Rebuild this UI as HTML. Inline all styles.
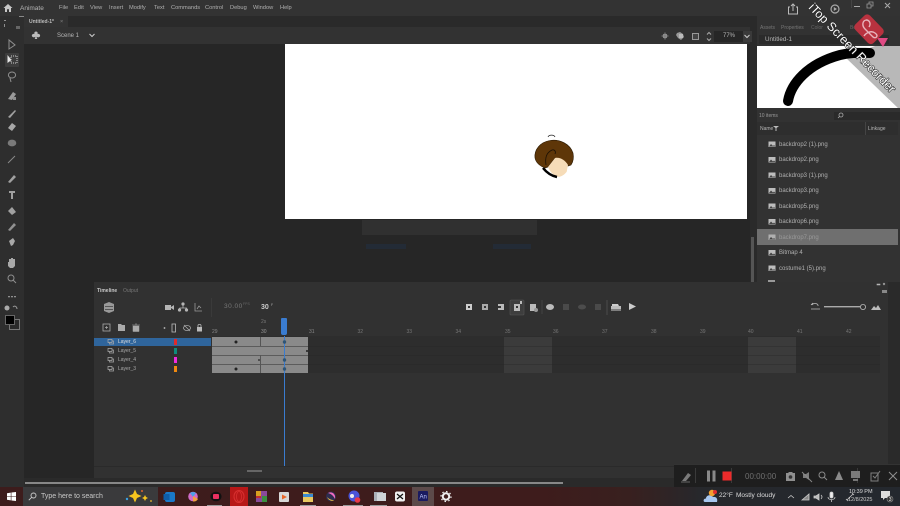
<!DOCTYPE html>
<html><head><meta charset="utf-8"><style>
html,body{margin:0;padding:0;width:900px;height:506px;overflow:hidden;background:#2b2b2b}
#r{position:absolute;left:0;top:0;width:900px;height:506px;overflow:hidden;font-family:"Liberation Sans",sans-serif;color:#c8c8c8;font-size:5.700px;filter:blur(.3px)}
.a{position:absolute}
.t{position:absolute;white-space:nowrap;line-height:1}
svg{position:absolute;overflow:visible}
</style></head><body><div id="r">
<!-- base regions -->
<div class="a" style="left:0;top:0;width:900px;height:16px;background:#333"></div>
<div class="a" style="left:0;top:16px;width:24px;height:471px;background:#2e2e2e"></div>
<div class="a" style="left:24px;top:16px;width:733px;height:11px;background:#2a2a2a"></div>
<div class="a" style="left:24px;top:27px;width:726px;height:17px;background:#323232"></div>
<div class="a" style="left:24px;top:44px;width:733px;height:238px;background:#262626"></div>
<div class="a" style="left:24px;top:282px;width:70px;height:205px;background:#262626"></div>
<div class="a" style="left:750px;top:27px;width:7px;height:255px;background:#2a2a2a"></div>
<div class="a" style="left:757px;top:16px;width:143px;height:266px;background:#323232"></div>
<div class="a" style="left:888px;top:282px;width:12px;height:205px;background:#2a2a2a"></div>
<div class="a" style="left:94px;top:282px;width:794px;height:196px;background:#313131"></div>
<div class="a" style="left:24px;top:478px;width:876px;height:9px;background:#2a2a2a"></div>

<!-- menu -->
<svg style="left:3px;top:3px" width="10" height="10" viewBox="0 0 10 10"><path d="M5 1 L9.500 5 H8 V9 H6 V6.200 H4 V9 H2 V5 H.5Z" fill="#c8c8c8"/></svg>
<span class="t" style="left:20px;top:6px;font-size:6.500px;color:#b5b5b5">Animate</span>
<div class="a" style="left:19px;top:16px;width:26px;height:1px;background:#888"></div>
<span class="t" style="left:59px;top:5.500px;color:#b0b0b0">File</span>
<span class="t" style="left:74px;top:5.500px;color:#b0b0b0">Edit</span>
<span class="t" style="left:90px;top:5.500px;color:#b0b0b0">View</span>
<span class="t" style="left:109px;top:5.500px;color:#b0b0b0">Insert</span>
<span class="t" style="left:129px;top:5.500px;color:#b0b0b0">Modify</span>
<span class="t" style="left:154px;top:5.500px;color:#b0b0b0">Text</span>
<span class="t" style="left:171px;top:5.500px;color:#b0b0b0">Commands</span>
<span class="t" style="left:205px;top:5.500px;color:#b0b0b0">Control</span>
<span class="t" style="left:230px;top:5.500px;color:#b0b0b0">Debug</span>
<span class="t" style="left:253px;top:5.500px;color:#b0b0b0">Window</span>
<span class="t" style="left:280px;top:5.500px;color:#b0b0b0">Help</span>

<!-- top right icons -->
<svg style="left:787px;top:3px" width="14" height="12" viewBox="0 0 14 12" fill="none" stroke="#bbb" stroke-width="1"><path d="M3 4H1.500V11H10.500V4H9M6 8V1M4 3L6 1L8 3"/></svg>
<svg style="left:830px;top:4px" width="10" height="10" viewBox="0 0 10 10"><circle cx="5" cy="5" r="4" fill="none" stroke="#aaa" stroke-width="1.200"/><path d="M3.800 3L7 5L3.800 7Z" fill="#aaa"/></svg>
<div class="a" style="left:851px;top:0;width:1px;height:8px;background:#444"></div>
<div class="a" style="left:854px;top:6px;width:6px;height:1px;background:#aaa"></div>
<svg style="left:866px;top:1px" width="8" height="8" viewBox="0 0 8 8" fill="none" stroke="#999" stroke-width=".8"><path d="M1 3H5V7H1ZM3 3V1H7V5H5"/></svg>
<svg style="left:884px;top:2px" width="7" height="7" viewBox="0 0 7 7" stroke="#aaa" stroke-width="1"><path d="M1 1L6 6M6 1L1 6"/></svg>

<!-- tab row -->
<div class="a" style="left:24px;top:16px;width:44px;height:11px;background:#333"></div>
<span class="t" style="left:29px;top:20px;font-size:5px;font-weight:bold;color:#bdbdbd">Untitled-1*</span>
<span class="t" style="left:60px;top:20px;font-size:5.500px;color:#888">×</span>
<!-- scene bar -->
<svg style="left:31px;top:31px" width="10" height="10" viewBox="0 0 10 10"><path d="M5 0.500C6.500 .5 7 2 6.500 3C8.500 2.500 9.500 4 9 5.300C8.400 6.600 6.500 6.600 5.500 5.800L6.300 8H3.700L4.500 5.800C3.500 6.600 1.600 6.600 1 5.300C.5 4 1.500 2.500 3.500 3C3 2 3.500 .5 5 .5Z" fill="#bbb"/></svg>
<span class="t" style="left:57px;top:33px;font-size:6px;color:#b5b5b5">Scene 1</span>
<svg style="left:89px;top:33px" width="6" height="5" viewBox="0 0 6 5" fill="none" stroke="#ccc" stroke-width="1"><path d="M.5 1L3 3.500L5.500 1"/></svg>
<!-- zoom controls -->
<svg style="left:661px;top:32px" width="8" height="8" viewBox="0 0 8 8"><circle cx="4" cy="4" r="2.400" fill="#999"/><path d="M4 .3V7.700M.3 4H7.700" stroke="#777" stroke-width=".8"/></svg>
<svg style="left:675px;top:31px" width="10" height="10" viewBox="0 0 10 10"><path d="M2 2L5 1L8 3L9 6L6 9L3 7L1 4Z" fill="#999"/><rect x="4" y="3" width="4" height="4" fill="#bbb"/></svg>
<div class="a" style="left:692px;top:33px;width:5px;height:5px;border:1.200px solid #999;background:#444"></div>
<svg style="left:706px;top:31px" width="6" height="11" viewBox="0 0 6 11" fill="none" stroke="#aaa" stroke-width="1"><path d="M1 3.500L3 1.500L5 3.500M1 7.500L3 9.500L5 7.500"/></svg>
<div class="a" style="left:714px;top:31px;width:29px;height:11px;background:#262626"></div>
<span class="t" style="left:723px;top:33px;font-size:6px;color:#b5b5b5">77%</span>
<div class="a" style="left:743px;top:31px;width:9px;height:11px;background:#3a3a3a"></div>
<svg style="left:744px;top:34px" width="6" height="5" viewBox="0 0 6 5" fill="none" stroke="#ccc" stroke-width="1"><path d="M.5 1L3 3.500L5.500 1"/></svg>

<!-- toolbar -->
<svg style="left:0;top:16px" width="24" height="310" viewBox="0 0 24 310">
<g fill="#8f8f8f">
<rect x="4" y="4" width="2" height="1"/><rect x="4" y="8" width="1" height="3"/><rect x="16" y="10" width="4" height="3" fill="#666"/>
<path d="M9 24V33L15 29Z" fill="none" stroke="#8f8f8f" stroke-width="1"/>
<rect x="5" y="37" width="14" height="14" rx="1" fill="#3d3d3d"/>
<path d="M7.500 39V47L11.500 44Z" fill="#e6e6e6"/><rect x="11" y="40" width="6" height="7" fill="none" stroke="#ccc" stroke-width="1" stroke-dasharray="1 1"/>
<ellipse cx="12" cy="59" rx="3.600" ry="3" fill="none" stroke="#8f8f8f" stroke-width="1"/><path d="M10 62L11 66" stroke="#8f8f8f" stroke-width="1"/>
<path d="M8 83L13 76L16 78L12 84Z" fill="#999"/><rect x="13" y="81" width="3" height="3"/>
<path d="M8 101L15 94L16 95L10 102Z" fill="#a0a0a0"/>
<path d="M8 112L12 107L16 110L12 115Z" fill="#a8a8a8"/>
<ellipse cx="12" cy="127" rx="4.300" ry="3.400" fill="#7a7a7a"/>
<path d="M8 147L15 140" stroke="#8a8a8a" stroke-width="1"/>
<path d="M8 166L14 159L16 161L10 167Z" fill="#a0a0a0"/>
<path d="M9 175H15V177H13V183H11V177H9Z" fill="#a0a0a0"/>
<path d="M8 195L12 191L16 196L12 199Z" fill="#a0a0a0"/>
<path d="M8 214L14 207L16 209L10 215Z" fill="#909090"/>
<path d="M9 225L13 222L15 225L13 229L11 230Z" fill="#a8a8a8"/>
<path d="M8 250V246H9V243H11V242H13V243H15V250L13 252H10Z" fill="#a8a8a8"/>
<circle cx="11" cy="262" r="3" fill="none" stroke="#8f8f8f"/><path d="M13 264L16 267" stroke="#8f8f8f"/>
<rect x="8" y="280" width="2" height="1.300"/><rect x="11" y="280" width="2" height="1.300"/><rect x="14" y="280" width="2" height="1.300"/>
<circle cx="7" cy="292" r="2.500" fill="#aaa"/><path d="M13 291C15 289 17 291 17 293" fill="none" stroke="#999"/>
</g>
</svg>
<div class="a" style="left:9px;top:319px;width:9px;height:9px;border:1px solid #777;background:#2a2a2a"></div>
<div class="a" style="left:5px;top:315px;width:8px;height:8px;background:#000;border:1px solid #666"></div>

<!-- stage -->
<div class="a" style="left:285px;top:44px;width:462px;height:175px;background:#fff"></div>
<svg style="left:530px;top:130px" width="50" height="52" viewBox="0 0 50 52">
<path d="M18 7C19 4.500 24 4.500 25 7" fill="none" stroke="#222" stroke-width=".8"/>
<path d="M5 28C4 20 10 12 20 10.500C30 9 40 14 43 23C44 28 43 32 41 35L38 36L25 28L18 37L15 38C10 36 6 33 5 28Z" fill="#5e3608" stroke="#2a1a05" stroke-width=".6"/>
<path d="M18 37L25 28C30 27 35 30 38 35L36.700 41.700C34 45 31 47 28 46.700C24 46 20 42 18 37Z" fill="#f6dcb8"/>
<path d="M16 35C15 28 16 23 22 20C25 19 26 22 25 24" fill="none" stroke="#1a1005" stroke-width=".8"/>
<path d="M13 38C17 43 22 46 27 47" fill="none" stroke="#000" stroke-width="2.500"/>
</svg>
<!-- faint dialog -->
<div class="a" style="left:362px;top:220px;width:175px;height:15px;background:#303030"></div>
<div class="a" style="left:366px;top:244px;width:40px;height:5px;background:#232b36"></div>
<div class="a" style="left:493px;top:244px;width:38px;height:5px;background:#232b36"></div>
<div class="a" style="left:751px;top:237px;width:3px;height:45px;background:#555"></div>

<!-- right panel -->
<span class="t" style="left:760px;top:26px;font-size:5px;color:#777">Assets</span>
<span class="t" style="left:781px;top:26px;font-size:5px;color:#777">Properties</span>
<span class="t" style="left:811px;top:26px;font-size:5px;color:#666">Color</span>
<span class="t" style="left:850px;top:26px;font-size:5px;color:#666">Be</span>
<div class="a" style="left:759px;top:35px;width:130px;height:9px;background:#2b2b2b"></div>
<span class="t" style="left:765px;top:36.500px;font-size:6.300px;color:#b5b5b5">Untitled-1</span>
<div class="a" style="left:757px;top:46px;width:143px;height:62px;background:#fff"></div>
<svg style="left:757px;top:46px" width="143" height="62" viewBox="0 0 143 62">
<clipPath id="p"><rect width="143" height="62"/></clipPath>
<g clip-path="url(#p)">
<path d="M88 11L143 64V0H118Z" fill="#b8b8b8"/>
<path d="M31 55C34 38 50 18 83 9C95 6 105 7 113 7" fill="none" stroke="#000" stroke-width="10" stroke-linecap="round"/>
</g>
</svg>
<span class="t" style="left:759px;top:114px;font-size:5px;color:#999">10 items</span>
<div class="a" style="left:834px;top:112px;width:66px;height:8px;background:#2a2a2a"></div>
<svg style="left:837px;top:112px" width="7" height="7" viewBox="0 0 7 7" fill="none" stroke="#aaa" stroke-width=".8"><circle cx="4" cy="3" r="2"/><path d="M2.500 4.500L1 6"/></svg>
<div class="a" style="left:757px;top:122px;width:141px;height:13px;background:#2e2e2e"></div>
<span class="t" style="left:760px;top:126.500px;font-size:5px;color:#b5b5b5">Name</span>
<svg style="left:773px;top:125px" width="6" height="6" viewBox="0 0 6 6" fill="#bbb"><path d="M0 1H6L3.500 3V6H2.500V3Z"/></svg>
<div class="a" style="left:865px;top:122px;width:1px;height:13px;background:#444"></div>
<span class="t" style="left:868px;top:126.500px;font-size:5px;color:#b5b5b5">Linkage</span>
<div class="a" style="left:757px;top:229px;width:141px;height:15.500px;background:#6f6f6f"></div>
<svg style="left:768px;top:136px" width="9" height="150" viewBox="0 0 9 150">
<rect x=".5" y="5.500" width="7" height="5.500" fill="#bdbdbd"/><rect x=".5" y="21" width="7" height="5.500" fill="#bdbdbd"/><rect x=".5" y="36.500" width="7" height="5.500" fill="#bdbdbd"/><rect x=".5" y="52" width="7" height="5.500" fill="#bdbdbd"/><rect x=".5" y="67.500" width="7" height="5.500" fill="#bdbdbd"/><rect x=".5" y="83" width="7" height="5.500" fill="#bdbdbd"/><rect x=".5" y="98.500" width="7" height="5.500" fill="#b0b0b0"/><rect x=".5" y="114" width="7" height="5.500" fill="#bdbdbd"/><rect x=".5" y="129.500" width="7" height="5.500" fill="#bdbdbd"/>
<path d="M1 10.500L3 8L5 10L6 9L7.500 10.500ZM1 26L3 23.500L5 25.500L6 24.500L7.500 26ZM1 41.500L3 39L5 41L6 40L7.500 41.500ZM1 57L3 54.500L5 56.500L6 55.500L7.500 57ZM1 72.500L3 70L5 72L6 71L7.500 72.500ZM1 88L3 85.500L5 87.500L6 86.500L7.500 88ZM1 103.500L3 101L5 103L6 102L7.500 103.500ZM1 119L3 116.500L5 118.500L6 117.500L7.500 119ZM1 134.500L3 132L5 134L6 133L7.500 134.500Z" fill="#444"/>
</svg>
<span class="t" style="left:779px;top:141.500px;font-size:6px;color:#b0b0b0">backdrop2 (1).png</span>
<span class="t" style="left:779px;top:157px;font-size:6px;color:#b0b0b0">backdrop2.png</span>
<span class="t" style="left:779px;top:172.500px;font-size:6px;color:#b0b0b0">backdrop3 (1).png</span>
<span class="t" style="left:779px;top:188px;font-size:6px;color:#b0b0b0">backdrop3.png</span>
<span class="t" style="left:779px;top:203.500px;font-size:6px;color:#b0b0b0">backdrop5.png</span>
<span class="t" style="left:779px;top:219px;font-size:6px;color:#b0b0b0">backdrop6.png</span>
<span class="t" style="left:779px;top:234.500px;font-size:6px;color:#9a9a9a">backdrop7.png</span>
<span class="t" style="left:779px;top:250px;font-size:6px;color:#b0b0b0">Bitmap 4</span>
<span class="t" style="left:779px;top:265.500px;font-size:6px;color:#b0b0b0">costume1 (5).png</span>
<div class="a" style="left:768px;top:280px;width:7px;height:2px;background:#999"></div>

<!-- timeline header -->
<span class="t" style="left:97px;top:289px;font-size:5px;font-weight:bold;color:#c8c8c8">Timeline</span>
<span class="t" style="left:123px;top:289px;font-size:5px;color:#777">Output</span>
<svg style="left:875px;top:282px" width="14" height="12" viewBox="0 0 14 12" fill="#aaa"><path d="M2 2H5V3H2ZM8 1L10 3M10 1L8 3" stroke="#bbb" stroke-width=".6"/><rect x="7" y="8" width="5" height="3" fill="#888"/></svg>
<!-- toolbar row -->
<svg style="left:94px;top:298px" width="794" height="45" viewBox="0 0 794 45">
<g fill="#b5b5b5">
<path d="M10 6L15 4L20 6V13L15 15L10 13Z" fill="#999"/><rect x="11" y="8" width="8" height="1" fill="#555"/><rect x="11" y="11" width="8" height="1" fill="#555"/>
<rect x="71" y="7" width="6" height="5"/><path d="M77 9L80 7V12L77 10Z"/>
<circle cx="89" cy="6" r="1.600"/><circle cx="85.500" cy="12" r="1.600"/><circle cx="92.500" cy="12" r="1.600"/><path d="M89 6V10M85.500 10H92.500V12M85.500 10V12" fill="none" stroke="#b5b5b5" stroke-width=".8"/>
<path d="M101 5V13H108M103 11L105 8L107 10" fill="none" stroke="#999" stroke-width=".8"/>
<rect x="372" y="6" width="6" height="6" fill="#ccc"/><rect x="374" y="8" width="2" height="2" fill="#333"/>
<rect x="388" y="6" width="6" height="6" fill="#aaa"/><rect x="390" y="8" width="2" height="2" fill="#333"/>
<rect x="404" y="6" width="6" height="6" fill="#bbb"/><rect x="404" y="8" width="3" height="2" fill="#333"/>
</g>
<rect x="416" y="2" width="14" height="15" rx="1" fill="#3e3e3e" stroke="#555" stroke-width=".6"/>
<g fill="#bbb">
<rect x="420" y="6" width="6" height="7"/><rect x="422" y="8" width="2" height="2" fill="#333"/><rect x="426" y="3" width="2" height="3"/>
<rect x="436" y="6" width="6" height="7"/><circle cx="442" cy="12" r="2" fill="#999"/>
<ellipse cx="456" cy="9" rx="4" ry="3"/>
<rect x="469" y="6" width="6" height="6" fill="#4a4a4a"/><ellipse cx="488" cy="9" rx="4" ry="2.500" fill="#4c4c4c"/><rect x="501" y="6" width="6" height="6" fill="#4a4a4a"/>
<path d="M518 6H524L525 8H518Z" fill="#ccc"/><rect x="517" y="8" width="10" height="3"/><rect x="517" y="11.500" width="10" height="1" fill="#ccc"/>
<path d="M535 5V12L542 8.500Z" fill="#ccc"/>
</g>
<rect x="512.500" y="2" width="1" height="15" fill="#4a4a4a"/>
<rect x="447.500" y="2" width="1" height="14" fill="#444"/>
<path d="M718 7C719 5 723 5 724 7V8M717 11H726M717 7L719 5" fill="none" stroke="#bbb" stroke-width=".8"/>
<rect x="730" y="8" width="36" height="1.400" fill="#aaa"/><circle cx="769" cy="9" r="2.600" fill="#333" stroke="#bbb" stroke-width=".8"/>
<path d="M777 12L780 8L782 10L784 7L787 12Z" fill="#bbb"/>
<rect x="9" y="26" width="7" height="7" fill="none" stroke="#aaa" stroke-width=".8"/><path d="M12.500 28V31M11 29.500H14" stroke="#aaa" stroke-width=".7"/>
<path d="M24 26H27L28 27H31V33H24Z" fill="#aaa"/>
<path d="M39 28H45V33.500H39ZM38 27H46M41 26H43" fill="#aaa" stroke="#aaa" stroke-width=".5"/>
<circle cx="70.500" cy="30" r=".9" fill="#bbb"/>
<rect x="78" y="26" width="3.500" height="8" fill="none" stroke="#bbb" stroke-width=".8"/>
<ellipse cx="93" cy="30" rx="3.500" ry="2.500" fill="none" stroke="#aaa" stroke-width=".8"/><path d="M90 27L96 33" stroke="#aaa" stroke-width=".8"/>
<rect x="103" y="29" width="5" height="4.500" fill="#bbb"/><path d="M104 29V27.500C104 26 107 26 107 27.500V29" fill="none" stroke="#bbb" stroke-width=".8"/>
</svg>
<span class="t" style="left:224px;top:304px;font-size:6.500px;letter-spacing:.5px;color:#777">30.00</span>
<span class="t" style="left:243px;top:303px;font-size:3.500px;color:#666">FPS</span>
<span class="t" style="left:261px;top:304px;font-size:7px;font-weight:bold;color:#ccc">30</span>
<span class="t" style="left:271px;top:304px;font-size:3.500px;color:#aaa">F</span>
<div class="a" style="left:211px;top:298px;width:1px;height:19px;background:#3a3a3a"></div>
<span class="t" style="left:261px;top:320px;font-size:5px;color:#777">2s</span>
<!-- ruler -->
<div class="a" style="left:212px;top:336px;width:668px;height:37px;background:#2d2d2d"></div>
<span class="t" style="left:212px;top:330px;font-size:5px;color:#888">29</span>
<span class="t" style="left:261px;top:330px;font-size:5px;color:#999">30</span>
<span class="t" style="left:309px;top:330px;font-size:5px;color:#888">31</span>
<span class="t" style="left:357.500px;top:330px;font-size:5px;color:#777">32</span>
<span class="t" style="left:406.500px;top:330px;font-size:5px;color:#777">33</span>
<span class="t" style="left:455.500px;top:330px;font-size:5px;color:#777">34</span>
<span class="t" style="left:505px;top:330px;font-size:5px;color:#777">35</span>
<span class="t" style="left:553px;top:330px;font-size:5px;color:#777">36</span>
<span class="t" style="left:602px;top:330px;font-size:5px;color:#777">37</span>
<span class="t" style="left:651px;top:330px;font-size:5px;color:#777">38</span>
<span class="t" style="left:700px;top:330px;font-size:5px;color:#777">39</span>
<span class="t" style="left:748px;top:330px;font-size:5px;color:#777">40</span>
<span class="t" style="left:797px;top:330px;font-size:5px;color:#777">41</span>
<span class="t" style="left:846px;top:330px;font-size:5px;color:#777">42</span>
<!-- layers -->
<div class="a" style="left:94px;top:338px;width:117px;height:8px;background:#2f659c"></div>
<svg style="left:107px;top:338px" width="8" height="36" viewBox="0 0 8 36" fill="none" stroke="#aaa" stroke-width=".7"><path d="M1 1.500H5V4.500H1ZM2.500 4.500V6H6.500V3H5M1 10.500H5V13.500H1ZM2.500 13.500V15H6.500V12H5M1 19.500H5V22.500H1ZM2.500 22.500V24H6.500V21H5M1 28.500H5V31.500H1ZM2.500 31.500V33H6.500V30H5"/></svg>
<span class="t" style="left:118px;top:340px;font-size:5px;color:#ddd">Layer_6</span>
<span class="t" style="left:118px;top:349px;font-size:5px;color:#aaa">Layer_5</span>
<span class="t" style="left:118px;top:358px;font-size:5px;color:#aaa">Layer_4</span>
<span class="t" style="left:118px;top:367px;font-size:5px;color:#aaa">Layer_3</span>
<div class="a" style="left:174px;top:339px;width:3px;height:5.500px;background:#e02a2a"></div>
<div class="a" style="left:174px;top:348px;width:3px;height:5.500px;background:#0e8c7c"></div>
<div class="a" style="left:174px;top:357px;width:3px;height:5.500px;background:#f02ae0"></div>
<div class="a" style="left:174px;top:366px;width:3px;height:5.500px;background:#f08a10"></div>
<!-- frames -->
<div class="a" style="left:212px;top:345.500px;width:668px;height:.6px;background:#2a2a2a"></div>
<div class="a" style="left:212px;top:354.500px;width:668px;height:.6px;background:#2a2a2a"></div>
<div class="a" style="left:212px;top:363.500px;width:668px;height:.6px;background:#2a2a2a"></div>
<div class="a" style="left:504px;top:337px;width:48px;height:36px;background:#3b3b3b"></div>
<div class="a" style="left:748px;top:337px;width:48px;height:36px;background:#3b3b3b"></div>
<div class="a" style="left:504px;top:345.500px;width:48px;height:.6px;background:#333"></div>
<div class="a" style="left:504px;top:354.500px;width:48px;height:.6px;background:#333"></div>
<div class="a" style="left:504px;top:363.500px;width:48px;height:.6px;background:#333"></div>
<div class="a" style="left:748px;top:345.500px;width:48px;height:.6px;background:#333"></div>
<div class="a" style="left:748px;top:354.500px;width:48px;height:.6px;background:#333"></div>
<div class="a" style="left:748px;top:363.500px;width:48px;height:.6px;background:#333"></div>
<div class="a" style="left:212px;top:337px;width:96px;height:36px;background:#8a8a8a"></div>
<div class="a" style="left:212px;top:345.500px;width:96px;height:1px;background:#5c5c5c"></div>
<div class="a" style="left:212px;top:354.500px;width:96px;height:1px;background:#5c5c5c"></div>
<div class="a" style="left:212px;top:363.500px;width:96px;height:1px;background:#5c5c5c"></div>
<div class="a" style="left:259.500px;top:337px;width:1px;height:9px;background:#555"></div>
<div class="a" style="left:259.500px;top:355px;width:1px;height:18px;background:#555"></div>
<svg style="left:212px;top:337px" width="100" height="36" viewBox="0 0 100 36" fill="#222">
<circle cx="24" cy="5" r="1.500"/><circle cx="24" cy="32" r="1.500"/><circle cx="95" cy="14" r="1"/><circle cx="47" cy="23" r=".9"/>
</svg>
<!-- playhead -->
<div class="a" style="left:284px;top:336px;width:1px;height:130px;background:#3a7cd0"></div>
<div class="a" style="left:281px;top:318px;width:6px;height:17px;background:#3a7cd0;border-radius:1px 1px 2px 2px"></div>
<svg style="left:281px;top:337px" width="8" height="36" viewBox="0 0 8 36" fill="#2f5475"><circle cx="3.500" cy="5" r="1.700"/><circle cx="3.500" cy="23" r="1.700"/><circle cx="3.500" cy="32" r="1.700"/></svg>
<!-- bottom -->
<div class="a" style="left:94px;top:466px;width:794px;height:1px;background:#2a2a2a"></div>
<div class="a" style="left:247px;top:470px;width:15px;height:2px;background:#666"></div>
<div class="a" style="left:25px;top:482px;width:538px;height:2px;background:#888"></div>

<!-- recorder bar -->
<div class="a" style="left:674px;top:464px;width:226px;height:23px;background:#1e1e1e;border-top:1px solid #333;box-sizing:border-box"></div>
<svg style="left:674px;top:464px" width="226" height="23" viewBox="0 0 226 23">
<path d="M8 17L14 9L17 11L12 17Z" fill="#7a7a7a"/><path d="M7 18H16" stroke="#666"/>
<path d="M21.500 4V19M57.500 4V19M183.500 4V19" stroke="#3a3a3a"/>
<rect x="33" y="6.500" width="3" height="11" fill="#8a8a8a"/><rect x="38.500" y="6.500" width="3" height="11" fill="#8a8a8a"/>
<rect x="48.500" y="7.500" width="9" height="9" fill="#ee2b2b"/>
<path d="M112 9H114L115 8H118L119 9H121V17H112Z" fill="#8f8f8f"/><circle cx="116.500" cy="13" r="1.800" fill="#333"/>
<path d="M129 10L132 10L135 8V16L132 14H129Z" fill="#7d7d7d"/><path d="M128 8L138 18" stroke="#888"/>
<circle cx="148" cy="11" r="3" fill="none" stroke="#8a8a8a"/><path d="M150 13L153 16" stroke="#8a8a8a"/>
<path d="M161 16L165 7L169 16Z" fill="#8a8a8a"/>
<rect x="177" y="7" width="9" height="7" fill="#7a7a7a"/><rect x="179" y="15" width="5" height="2" fill="#777"/>
<rect x="197" y="9" width="7" height="8" fill="none" stroke="#7f7f7f"/><path d="M199 12L201 14L206 7" fill="none" stroke="#7f7f7f"/>
<path d="M215 8L223 16M223 8L215 16" stroke="#8f8f8f"/>
</svg>
<span class="t" style="left:745px;top:472.500px;font-size:8px;color:#6f6f6f">00:00:00</span>

<!-- taskbar -->
<div class="a" style="left:0;top:487px;width:900px;height:19px;background:linear-gradient(90deg,#3d1c1c 0,#3e1c1c 60%,#38201f 70%,#26282c 78%,#24282e 100%)"></div>
<svg style="left:7px;top:492px" width="9" height="9" viewBox="0 0 9 9" fill="#fff"><path d="M0 1.200L3.800 .6V4.200H0ZM4.400 .5L9 0V4.200H4.400ZM0 4.800H3.800V8.400L0 7.800ZM4.400 4.800H9V9L4.400 8.500Z"/></svg>
<div class="a" style="left:23px;top:487px;width:135px;height:19px;background:#3a3a3c"></div>
<svg style="left:28px;top:492px" width="9" height="9" viewBox="0 0 9 9" fill="none" stroke="#ccc" stroke-width=".9"><circle cx="5.500" cy="3.500" r="2.500"/><path d="M3.700 5.300L.8 8.200"/></svg>
<span class="t" style="left:41px;top:493px;font-size:7px;color:#c8c8c8">Type here to search</span>
<svg style="left:124px;top:489px" width="30" height="15" viewBox="0 0 30 15"><path d="M11 0.500L13 5L17.500 7L13 9L11 13.500L9 9L4.500 7L9 5Z" fill="#f7c51e"/><path d="M21 6L22 8L24 9L22 10L21 12L20 10L18 9L20 8Z" fill="#f7c51e"/><circle cx="3" cy="10" r="1.200" fill="#3aa0e0"/><circle cx="18" cy="2" r="1" fill="#e0642a"/><circle cx="27" cy="12" r="1" fill="#c8a030"/></svg>
<!-- taskbar icons -->
<svg style="left:160px;top:487px" width="300" height="19" viewBox="0 0 300 19">
<rect x="5" y="5" width="10" height="10" rx="2" fill="#1a78c8"/><rect x="3.500" y="7" width="6" height="6" fill="#0f5ca8"/>
<circle cx="33" cy="9.500" r="4.800" fill="#d06cc8"/><path d="M30 6a5 5 0 0 1 6 0L33 10Z" fill="#4ca0e8"/><path d="M33 9L38 12A5 5 0 0 1 33 14.500Z" fill="#f0a040"/>
<ellipse cx="56" cy="9.500" rx="5.500" ry="4.800" fill="#111"/><rect x="53" y="7" width="6" height="5" rx="1" fill="#e83060"/>
<rect x="70" y="0" width="18" height="19" fill="#b81818"/><ellipse cx="79" cy="9.500" rx="5" ry="6" fill="none" stroke="#d83030" stroke-width="1"/><ellipse cx="79" cy="9.500" rx="2.500" ry="5" fill="none" stroke="#d83030" stroke-width=".8"/>
<rect x="96" y="4" width="11" height="11" fill="#8a4a9a"/><rect x="96" y="4" width="5" height="5" fill="#d8a020"/><rect x="102" y="9" width="5" height="6" fill="#3a9040"/><rect x="96" y="9" width="5" height="2" fill="#c03030"/>
<rect x="119" y="5" width="10" height="10" rx="1" fill="#d8d8d8"/><path d="M122 7.500L127 10L122 12.500Z" fill="#e8662a"/>
<path d="M143 5H148L149 6.500H153V15H143Z" fill="#e8c860"/><rect x="143" y="7" width="10" height="3" fill="#3a8ad0"/>
<circle cx="171" cy="9.500" r="5" fill="#2e2e50"/><path d="M168 6C172 4 176 7 175 12C173 8 171 7 168 6Z" fill="#f06ac0"/><path d="M167 10C168 13 172 15 174 13C171 13 169 12 167 10Z" fill="#f0c040"/>
<circle cx="194" cy="9" r="5.500" fill="#4a54d8"/><circle cx="192" cy="9" r="2" fill="#eee"/><circle cx="197.500" cy="13" r="2.800" fill="#e83848"/>
<rect x="214" y="5" width="9" height="9" fill="#aab0b8"/><rect x="217" y="6" width="9" height="8" fill="#d0d4d8"/>
<rect x="235" y="4.500" width="10" height="10" rx="2" fill="#f0f0f0"/><path d="M237 7L243 12M243 7L237 12" stroke="#111" stroke-width="1.200"/>
<rect x="252" y="0" width="22" height="19" fill="#5c4a4a"/><rect x="258" y="4" width="10" height="10" rx="1" fill="#1a1a60"/>
<text x="259.500" y="11.500" font-size="6" fill="#c0c8ff" font-family="Liberation Sans">An</text>
<circle cx="286" cy="9.500" r="3.200" fill="none" stroke="#eee" stroke-width="2"/><circle cx="286" cy="9.500" r="5" fill="none" stroke="#eee" stroke-width="1.300" stroke-dasharray="1.500 2.400"/>
<path d="M47 18.500H62M140 18.500H156M183 18.500H203M210 18.500H227" stroke="#999" stroke-width="1"/>
</svg>
<!-- tray -->
<svg style="left:703px;top:489px" width="16" height="15" viewBox="0 0 16 15"><path d="M2 13C0 13 0 9.500 3 9.500C3 6 8 5 10 8C13 7.500 15 9.500 14 13Z" fill="#a8c8f0"/><circle cx="9" cy="4" r="3.200" fill="#f0a030"/><circle cx="12" cy="3" r="2" fill="#e03030"/></svg>
<span class="t" style="left:719px;top:493px;font-size:6.500px;color:#ddd">22°F</span>
<span class="t" style="left:736px;top:493px;font-size:6.500px;color:#ddd">Mostly cloudy</span>
<svg style="left:787px;top:491px" width="90" height="12" viewBox="0 0 90 12" fill="none" stroke="#ccc" stroke-width=".8"><path d="M1 7L4 4.500L7 7"/><path d="M15 9L22 3V9Z" fill="#888"/><path d="M27 5H29L32 3V9L29 7H27Z" fill="#bbb"/><path d="M34 4Q36 6 34 8"/><rect x="43" y="1" width="3" height="6" rx="1.500" fill="#eee"/><path d="M41 6C41 9.500 48 9.500 48 6M44.500 9V11"/><path d="M60 9L66 3M59 8L61 10M65 2L67 4"/></svg>
<span class="t" style="left:849px;top:489.500px;font-size:5.500px;color:#ddd">10:39 PM</span>
<span class="t" style="left:848px;top:497.500px;font-size:5.500px;color:#ccc">12/8/2025</span>
<svg style="left:880px;top:490px" width="14" height="13" viewBox="0 0 14 13"><path d="M1 1H10V8H5L3 10V8H1Z" fill="#ddd"/><circle cx="10" cy="9" r="3" fill="#333" stroke="#888" stroke-width=".6"/><text x="8.700" y="11" font-size="5" fill="#eee" font-family="Liberation Sans">3</text></svg>

<!-- watermark -->
<svg style="left:800px;top:0" width="100" height="110" viewBox="0 0 100 110">
<path d="M77 38L88 38L83 47Z" fill="#e04a84"/>
<rect x="56" y="19" width="26" height="20.500" rx="4" transform="rotate(46 69 29.250)" fill="#b8323f"/>
<path d="M66 20C62 21 62 26 65 29L73 37C76 39 79 36 75 33C71 30 66 33 64 36M66 20C70 20 71 24 69 27" fill="none" stroke="#e8b4bc" stroke-width="1.400"/>
<text x="0" y="0" transform="translate(8 8) rotate(46)" font-family="Liberation Sans" font-size="12.300" fill="#fff" stroke="#222" stroke-width="1.100" paint-order="stroke">iTop Screen Recorder</text>
</svg>
</div></body></html>
